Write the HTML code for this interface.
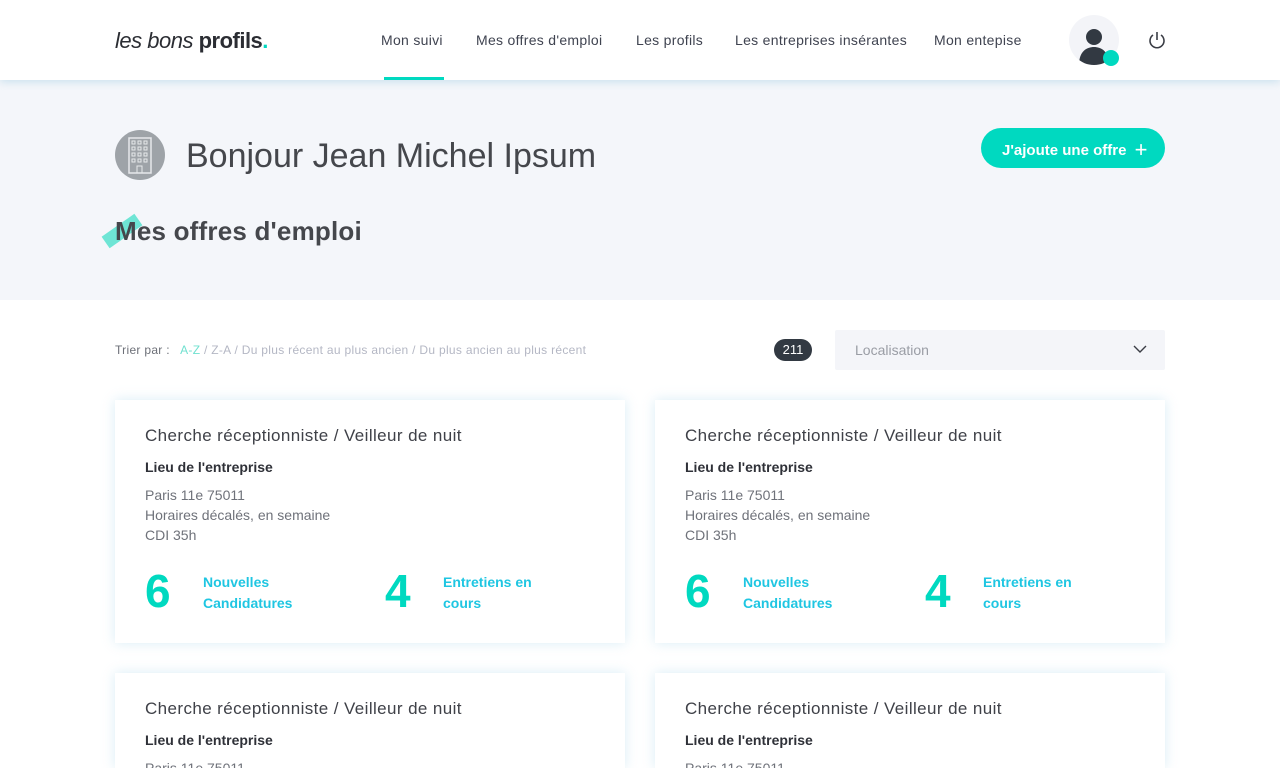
<!DOCTYPE html>
<html style="overflow:hidden;height:768px"><head><meta charset="utf-8"><style>
*{margin:0;padding:0;box-sizing:border-box}
body{width:1280px;height:768px;overflow:hidden;background:#fff;font-family:"Liberation Sans",sans-serif;color:#3f4148;position:relative}
.hdr{position:absolute;left:0;top:0;width:1280px;height:80px;background:#fff;box-shadow:0 2px 8px rgba(150,200,225,.45);z-index:2}
.logo{position:absolute;left:115px;top:28px;font-size:22px;color:#2b2d33;letter-spacing:-0.5px}
.logo i{font-weight:300}
.logo b{font-weight:700}
.logo span{color:#00d9c0;font-weight:700}
.nav a{position:absolute;top:32px;font-size:14px;color:#3f4350;text-decoration:none;white-space:nowrap;letter-spacing:0.3px}
.ul{position:absolute;left:384px;top:77px;width:60px;height:3px;background:#00d9c0}
.av{position:absolute;left:1069px;top:15px;width:50px;height:50px;border-radius:50%;background:#f3f4f8;overflow:hidden}
.hero{position:absolute;left:0;top:80px;width:1280px;height:220px;background:#f4f6fa}
.bld{position:absolute;left:115px;top:130px;width:50px;height:50px;border-radius:50%;background:#9ea3a8}
h1{position:absolute;left:186px;top:137px;font-size:34px;font-weight:400;color:#45474c;white-space:nowrap}
h2{position:absolute;left:115px;top:216px;font-size:26px;font-weight:700;color:#45474c;white-space:nowrap;letter-spacing:0.2px}
.tag{position:absolute;left:102px;top:224px;width:40px;height:14px;background:#6ee5d5;transform:rotate(-35deg)}
.btn{position:absolute;left:981px;top:128px;width:184px;height:40px;border-radius:20px;background:#00d9c0;color:#fff;font-size:15px;font-weight:700;line-height:40px;padding-left:21px}
.sort{position:absolute;left:115px;top:343px;font-size:12px;color:#6d7078;letter-spacing:0.3px}
.sort span{color:#b4b7c4}
.badge{position:absolute;left:774px;top:339px;width:38px;height:22px;border-radius:11px;background:#323942;color:#fff;font-size:13px;text-align:center;line-height:22px}
.sel{position:absolute;left:835px;top:330px;width:330px;height:40px;background:#f4f5f9;border-radius:2px;font-size:14px;color:#9a9da5;line-height:40px;padding-left:20px}
.card{position:absolute;width:510px;height:243px;background:#fff;box-shadow:0 0 12px rgba(170,215,235,.45)}
.card .t{position:absolute;left:30px;top:26px;font-size:17px;color:#3f4148;white-space:nowrap;letter-spacing:0.4px}
.card .l{position:absolute;left:30px;top:59px;font-size:14px;color:#2f3138;font-weight:700}
.card .d{position:absolute;left:30px;top:85px;font-size:14px;line-height:20px;color:#6f727a}
.card .n{position:absolute;top:163px;font-size:46px;color:#00d9c0;line-height:56px;font-weight:700}
.card .k{position:absolute;top:172px;font-size:14px;line-height:20.5px;color:#1fc6e2;font-weight:700}
</style></head><body>
<div class="hdr">
<div class="logo"><i>les bons </i><b>profils</b><span>.</span></div>
<div class="nav"><a style="left:381px">Mon suivi</a><a style="left:476px">Mes offres d'emploi</a><a style="left:636px">Les profils</a><a style="left:735px">Les entreprises insérantes</a><a style="left:934px">Mon entepise</a></div>
<div class="ul"></div>
<div class="av"><svg width="50" height="50"><circle cx="25" cy="22" r="8" fill="#323942"/><path d="M10 50 C10 36 18 32 25 32 C32 32 40 36 40 50Z" fill="#323942"/></svg></div>
<div style="position:absolute;left:1103px;top:50px;width:16px;height:16px;border-radius:50%;background:#00d9c0"></div>
<svg style="position:absolute;left:1147px;top:30px" width="20" height="20" fill="none" stroke="#3a3d45" stroke-width="1.6"><path d="M10 2 V10"/><path d="M6 5 A7 7 0 1 0 14 5"/></svg>
</div>
<div class="hero"></div>
<div class="bld"><svg width="50" height="50"><rect x="14" y="8" width="22" height="35" fill="none" stroke="#e6e8ea" stroke-width="1.5"/><g fill="none" stroke="#e6e8ea" stroke-width="1"><rect x="17" y="11" width="3" height="3"/><rect x="23" y="11" width="3" height="3"/><rect x="29" y="11" width="3" height="3"/><rect x="17" y="17" width="3" height="3"/><rect x="23" y="17" width="3" height="3"/><rect x="29" y="17" width="3" height="3"/><rect x="17" y="23" width="3" height="3"/><rect x="23" y="23" width="3" height="3"/><rect x="29" y="23" width="3" height="3"/><rect x="17" y="29" width="3" height="3"/><rect x="23" y="29" width="3" height="3"/><rect x="29" y="29" width="3" height="3"/><rect x="22" y="36" width="5" height="7"/></g></svg></div>
<h1>Bonjour Jean Michel Ipsum</h1>
<div class="tag"></div>
<h2>Mes offres d'emploi</h2>
<div class="btn">J'ajoute une offre <span style="font-size:22px;font-weight:400;position:relative;top:2px;margin-left:4px">+</span></div>
<div class="sort">Trier par : &nbsp; <span style="color:#6fe0cf">A-Z</span> <span>/ Z-A / Du plus récent au plus ancien / Du plus ancien au plus récent</span></div>
<div class="badge">211</div>
<div class="sel">Localisation<svg style="position:absolute;right:18px;top:15px" width="14" height="9" fill="none" stroke="#3a3d45" stroke-width="1.4"><path d="M1 1 L7 7 L13 1"/></svg></div>

<div class="card" style="left:115px;top:400px"><div class="t">Cherche réceptionniste / Veilleur de nuit</div><div class="l">Lieu de l'entreprise</div><div class="d">Paris 11e 75011<br>Horaires décalés, en semaine<br>CDI 35h</div><div class="n" style="left:30px">6</div><div class="k" style="left:88px">Nouvelles<br>Candidatures</div><div class="n" style="left:270px">4</div><div class="k" style="left:328px">Entretiens en<br>cours</div></div>
<div class="card" style="left:655px;top:400px"><div class="t">Cherche réceptionniste / Veilleur de nuit</div><div class="l">Lieu de l'entreprise</div><div class="d">Paris 11e 75011<br>Horaires décalés, en semaine<br>CDI 35h</div><div class="n" style="left:30px">6</div><div class="k" style="left:88px">Nouvelles<br>Candidatures</div><div class="n" style="left:270px">4</div><div class="k" style="left:328px">Entretiens en<br>cours</div></div>
<div class="card" style="left:115px;top:673px;height:95px"><div class="t">Cherche réceptionniste / Veilleur de nuit</div><div class="l">Lieu de l'entreprise</div><div class="d">Paris 11e 75011</div></div>
<div class="card" style="left:655px;top:673px;height:95px"><div class="t">Cherche réceptionniste / Veilleur de nuit</div><div class="l">Lieu de l'entreprise</div><div class="d">Paris 11e 75011</div></div>
</body></html>
